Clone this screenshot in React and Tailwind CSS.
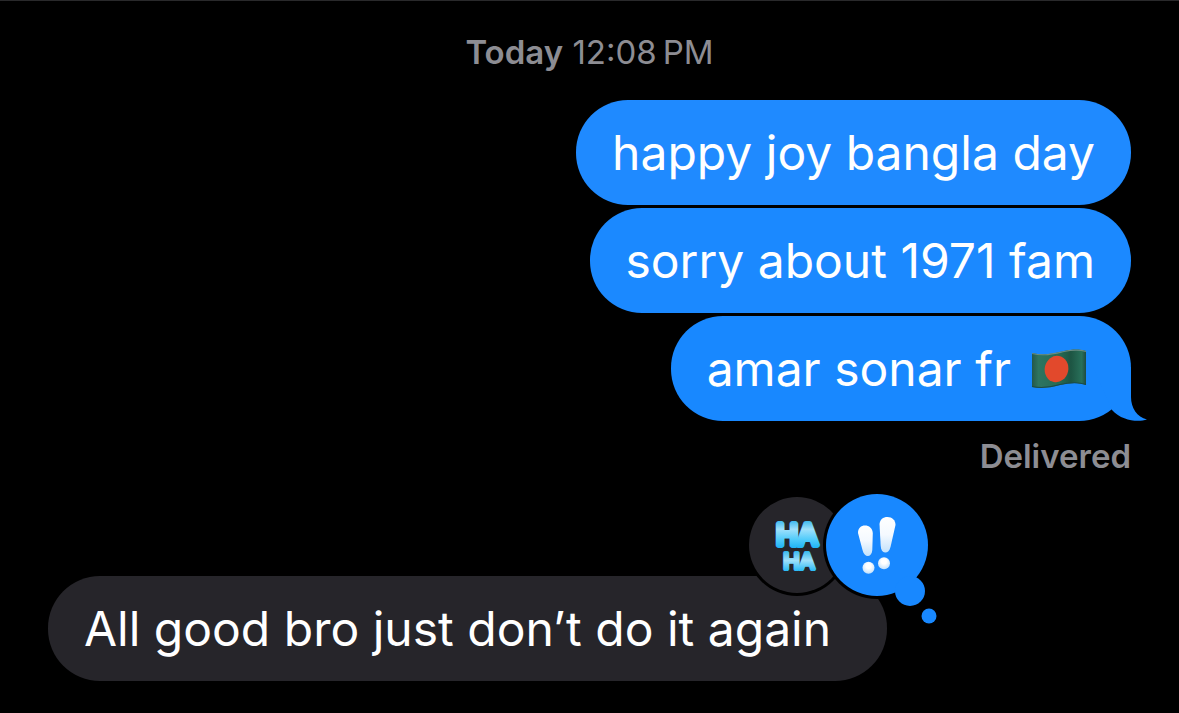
const sent = [
  { id: 1, text: "happy joy bangla day", color: "bg-[#1f8aff]" },
  { id: 2, text: "sorry about 1971 fam", color: "bg-[#1b89ff]" },
  { id: 3, text: "amar sonar fr", color: "bg-[#1888ff]", flag: true, last: true },
];

function FlagIcon() {
  return (
    <svg className="mr-2 h-[42px] w-[56px] shrink-0" viewBox="0 0 56 42" role="img" aria-label="Flag of Bangladesh">
      <defs>
        <linearGradient id="flagGreen" x1="0" x2="1" y1="0" y2="0">
          <stop offset="0" stopColor="#24574a" />
          <stop offset="0.12" stopColor="#2e7460" />
          <stop offset="0.5" stopColor="#256b54" />
          <stop offset="0.72" stopColor="#1d5543" />
          <stop offset="0.92" stopColor="#28705a" />
          <stop offset="1" stopColor="#1f4a40" />
        </linearGradient>
      </defs>
      <path d="M1 5C14 8 24 5 33 3C42 1 49 1 55 3V37C46 34 38 35 29 37C19 40 10 41 1 39Z" fill="url(#flagGreen)" />
      <path d="M1 5.500C14 8.500 24 5.500 33 3.500C42 1.500 49 1.500 55 3.500" fill="none" stroke="#6a8b80" strokeWidth="1.200" />
      <path d="M1 38.500C10 40.500 19 39.500 29 36.500C38 34.500 46 33.500 55 36.500" fill="none" stroke="#1c4a48" strokeWidth="1.200" />
      <ellipse cx="25.500" cy="21" rx="11.800" ry="13.200" fill="#e2492c" transform="rotate(12 25.500 21)" />
    </svg>
  );
}

function BubbleTail() {
  return (
    <svg className="absolute bottom-0 -right-4 h-[54px] w-[54px]" viewBox="0 0 54 54" aria-hidden="true">
      <path d="M0 0H38V30C38 41 44 50 54 52.500C45 55.500 29 54 19 43Z" fill="#1888ff" />
    </svg>
  );
}

function Reactions() {
  return (
    <svg className="absolute -top-[86px] -right-[56px] h-[140px] w-[200px]" viewBox="0 0 200 140" role="img" aria-label="Haha and emphasis reactions">
      <defs>
        <linearGradient id="haha" gradientUnits="userSpaceOnUse" x1="0" x2="0" y1="31" y2="83">
          <stop offset="0" stopColor="#3fb9ee" />
          <stop offset="0.16" stopColor="#9fe0fb" />
          <stop offset="0.36" stopColor="#4fcbfa" />
          <stop offset="0.56" stopColor="#12aef3" />
          <stop offset="0.6" stopColor="#45bdf0" />
          <stop offset="0.76" stopColor="#9fe0fb" />
          <stop offset="1" stopColor="#12b4f6" />
        </linearGradient>
        <linearGradient id="mark" x1="0" x2="0" y1="0" y2="1">
          <stop offset="0" stopColor="#ffffff" />
          <stop offset="0.5" stopColor="#f4f9ff" />
          <stop offset="1" stopColor="#c4e2fb" />
        </linearGradient>
        <radialGradient id="dot" cx="0.5" cy="0.35" r="0.7">
          <stop offset="0.3" stopColor="#ffffff" />
          <stop offset="1" stopColor="#b9dcfb" />
        </radialGradient>
      </defs>

      <circle cx="54" cy="55" r="51" fill="#000" />
      <circle cx="54" cy="55" r="48" fill="#26252a" />
      <text
        fill="url(#haha)"
        stroke="url(#haha)"
        strokeLinejoin="round"
        strokeLinecap="round"
        textAnchor="middle"
      >
        <tspan x="54" y="55" fontSize="29" strokeWidth="6">HA</tspan>
        <tspan x="56" y="79" fontSize="22" strokeWidth="4">HA</tspan>
      </text>

      <circle cx="134" cy="55" r="54" fill="#000" />
      <circle cx="134" cy="55" r="51" fill="#1888ff" />
      <circle cx="167" cy="101" r="15" fill="#1888ff" />
      <circle cx="186" cy="126" r="7.500" fill="#1888ff" />

      <path d="M115 43C115 38 118 35.500 122 35.500S129.500 38 129.800 43L129.300 60C129 64 127 66 124.800 66S120.500 64 119.500 60Z" fill="url(#mark)" />
      <circle cx="125.500" cy="77.800" r="6" fill="url(#dot)" />
      <path d="M136.500 34C137 29.500 140 27 144.500 27S152.500 30 152.500 35L147.500 57C146.500 61 144.500 62.800 142 62.600S138 60 137.700 56Z" fill="url(#mark)" />
      <circle cx="141" cy="73.300" r="6" fill="url(#dot)" />
    </svg>
  );
}

export default function App() {
  return (
    <main className="min-h-screen border-t border-[#29292b] bg-black px-12 pb-8 font-['Inter',sans-serif] text-white">
      <p className="pt-[31px] text-center text-[33px] leading-10 text-[#8d8d93]">
        <span className="font-semibold">Today</span> 12:08&#8239;PM
      </p>

      <section className="mt-7 flex flex-col items-end gap-[3px]">
        {sent.map((message) => (
          <div
            key={message.id}
            className={`relative flex items-center gap-5 rounded-[52px] px-9 py-[22px] text-5xl leading-[61px] ${message.color}`}
          >
            {message.last && <BubbleTail />}
            <p className="relative whitespace-nowrap">{message.text}</p>
            {message.flag && <FlagIcon />}
          </div>
        ))}
        <p className="mt-3 text-[33px] leading-10 font-semibold text-[#8d8d93]">Delivered</p>
      </section>

      <section className="mt-[100px] flex">
        <div className="relative rounded-[52px] bg-[#26252a] pr-14 pl-9 py-[22px] text-5xl leading-[61px]">
          <p className="whitespace-nowrap">All good bro just don’t do it again</p>
          <Reactions />
        </div>
      </section>
    </main>
  );
}
